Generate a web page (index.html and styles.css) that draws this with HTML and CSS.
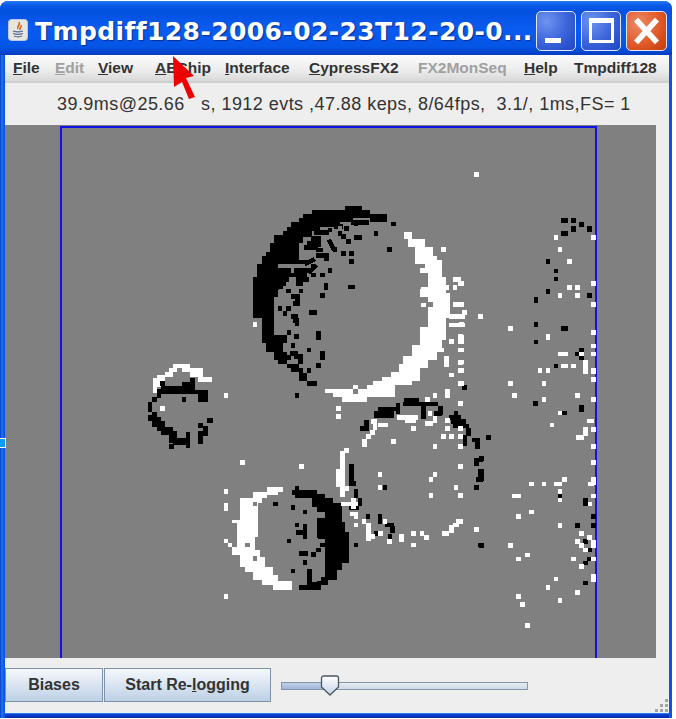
FILE: index.html
```html
<!DOCTYPE html>
<html lang="en">
<head>
<meta charset="utf-8">
<title>Tmpdiff128</title>
<link rel="stylesheet" href="styles.css">
</head>
<body>
<div class="window">
  <header class="titlebar">
    <svg class="appicon" viewBox="0 0 20 22" aria-hidden="true">
      <rect x="0.5" y="0.5" width="19" height="21" rx="3" fill="#e9e6e0" stroke="#b9c6e4"/>
      <path d="M11 3c2 3-3 4-1 7M13 6c1 2-2 3-1 5" fill="none" stroke="#d8641e" stroke-width="1.6"/>
      <path d="M5 12c3 1 7 1 10 0M5 14.5c3 1 7 1 10 0M6 17c2 1 6 1 8 0" fill="none" stroke="#4f6f97" stroke-width="1.3"/>
    </svg>
    <div class="title">Tmpdiff128-2006-02-23T12-20-0...</div>
    <div class="winbtns">
      <div class="winbtn"><span class="min-glyph"></span></div>
      <div class="winbtn"><span class="max-glyph"></span></div>
      <div class="winbtn close">
        <svg viewBox="0 0 40 40" class="x-glyph" aria-hidden="true"><path d="M9 8L31 32M31 8L9 32" stroke="#fff" stroke-width="6" fill="none"/></svg>
      </div>
    </div>
  </header>
  <div class="client">
    <nav class="menubar">
      <span><u>F</u>ile</span>
      <span class="off"><u>E</u>dit</span>
      <span><u>V</u>iew</span>
      <span><u>A</u>EChip</span>
      <span><u>I</u>nterface</span>
      <span><u>C</u>ypressFX2</span>
      <span class="off">FX2MonSeq</span>
      <span><u>H</u>elp</span>
      <span>Tmpdiff128</span>
    </nav>
    <div class="status">39.9ms@25.66   s, 1912 evts ,47.88 keps, 8/64fps,  3.1/, 1ms,FS= 1</div>
    <div class="canvas">
      <svg class="events" viewBox="5 125 651 533" aria-hidden="true">
        <path class="frame" d="M61 658V127H596V658"/>
        <g transform="translate(140 190) scale(.33333)">
          <path class="fk" d="M615 48V60H515V73H490V85H478V97H452V110H440V122H428V135H402V160H390V185H378V197H365V222H352V260H340V385H365V460H378V485H402V510H415V522H440V535H452V547H478V572H500V550H490V535H478V522H440V510H440V485H428V460H440V435H402V322H415V298H428V275H440V250H415V235H415V210H478V160H490V135H515V122H540V110H560V110H600V97H640V85H690V97H742V73H690V60H665V48Z"/>
          <path class="fw" d="M792 125H815V147H855V172H880V197H892V210H905V260H917V310H930V385H917V450H905V485H892V510H865V535H840V572H815V585H765V622H680V635H605V622H580V610H555V598H640V585H655V598H680V585H700V572H725V560H752V547H778V522H790V497H815V465H840V410H865V350H880V335H865V322H840V298H865V250H840V235H855V222H825V172H805V147H792Z"/>
          <path class="fw" d="M38 610V565H50V555H75V547H88V535H100V522H150V535H188V560H215V575H175V560H150V547H125V535H113V547H100V560H75V572H62V590H50V610Z"/>
          <path class="fk" d="M50 610V598H62V588H125V575H150V563H165V600H205V635H175V612H100V612H62V625H50V635H37V665H50V680H62V692H75V710H100V722H112V745H137V725H150V775H137V765H100V760H88V735H62V722H50V710H37V692H25V675H37V665H25V635H37V622H50Z"/>
          <path class="k" d="M132 628h0M182 730v25M196 715v16M208 692h0M182 706h0M94 770h0M68 580h0"/>
          <path class="k" d="M648 102h0M620 115h0M584 102h0M708 90h0M708 130h0M760 102h0M648 142h12M748 178h0M508 160h14M570 155l10 20M585 178h0M610 190h0M635 190h0M635 215h0M536 196h24v10M460 155h0M435 190h0M460 190v18M520 230h0M570 242h0M485 242h0M510 242h0M520 255h0M548 255h0M558 285v8M630 291h8M548 316h0M445 303h0M483 303h0M460 320h12v20h-6M420 355h0M445 355h0M435 370h0M460 380h6M465 392h6v8M515 367h8M535 430v14M470 440h0M447 427h0M459 467h0M507 480h0M547 490v14M458 490h10M470 500h12v14M445 503h0M535 527h0M507 542h0M508 580h16M471 617h0M600 115v16M610 140h0M625 155h0M570 120h0M975 592h0"/>
          <path class="k" d="M420 216h75M420 242h25M470 242h30M445 255h50M410 268h30M475 268h25M405 281h25M475 281h8M395 293h15M500 220l18 -10M510 245l15 -15M520 145h15v20M500 172h26M535 180h8M485 135h25M530 128h30M590 110h12M640 97h40"/>
          <path class="w" d="M345 403h0M910 178h0M945 268h12M960 280h0M945 292h0M920 292h0M947 343h16M975 367h0M935 380h32M935 405h32M962 440v15M935 455h0M962 480h0M905 480h0M920 505v20M962 517h0M962 542h0M935 555h0M962 580h0M922 604v12M885 617h0M862 628h0M595 655h0M595 680h0M258 617h0M68 655h0M850 298h14M850 345h0"/>
          <path class="g" d="M118 540h0M600 115h0"/>
        </g>
        <g transform="translate(210 390) scale(.33333)">
          <path class="fw" d="M172 290H220V305H205V315H170V325H155V340H145V440H135V480H150V500H165V530H190V555H205V572H245V600H190V585H155V570H130V545H105V530H90V495H65V470H80V400H65V390H90V325H130V305H172Z"/>
          <path class="fk" d="M245 300H255V288H268V300H320V312H345V325H370V340H395V395H405V425H418V520H395V540H380V570H355V585H332V600H268V585H292V538H305V575H320V560H345V445H320V385H345V365H320V350H305V325H255V315H245Z"/>
          <path class="fk" d="M493 85V62H505V50H560V62H552V85Z"/>
          <path class="k" d="M590 30h30M585 42h50M564 45v20M640 50v30M650 42h28M692 55v12M680 70h10M738 70h0M725 82h20M730 95h30M735 108h35M775 120v10M765 142v18M792 150h10v20M800 210h12M800 216v6M812 245v20M805 268h8M800 293h0M835 142h0M525 293h0M470 98v8M456 115h14M424 230v50M432 280h0M438 305v12M450 330v12M425 352h16M474 380h0M510 380v14M533 405h12M548 415v6M498 430h0M540 440h0M438 465h0M812 465h0"/>
          <path class="k" d="M196 342h0M249 353h0M285 366h0M261 405h0M265 428h20M285 410v30M237 453h0M330 441h10M338 465h0M325 480h0M311 493h0M275 490h12M285 518h0M249 543h0M261 16h0M2 92h0"/>
          <path class="w" d="M398 190v125M386 245v40M410 182h0M410 295h0M400 342h36M430 330v20M426 372h12v8M438 405h0M462 395h0M475 405v40M488 440h0M512 430h0M538 455h0M575 440v10M610 430h0M636 430h0M650 442h0M610 465h0M702 430h8M725 412v10M735 405h5M745 395h6M800 418h0M525 395h0M900 465h0M568 82h50M592 92h20M652 100h10M660 70h0M675 85v6M490 95h5M495 100v12M512 105h14M487 128h0M475 140h0M463 155v10M48 305h0M48 345v10M98 217h0M274 229h0M48 619h0M48 16h0M48 453h0M60 465h0M510 253h0M510 293h0M675 253h0M663 268h0M738 293h0M663 317h0M752 317h0M752 230h0M385 55h0M385 80h0M752 40h0M675 16h0M712 8v8M610 116h0M550 155h0M675 170h0M752 170h0M700 140h0M725 140h0M752 140h0M752 116h0M712 116h0M712 92h0M652 28h0"/>
          <path class="g" d="M135 342h0M113 465h0M135 505h0M325 566h0M437 5h0"/>
        </g>
        <g transform="translate(460 160) scale(.33333)">
          <path class="k" d="M310 181h6M340 181h0M364 193h0M340 205v4M388 205v4M310 220h6M264 305h0M288 333h0M288 357h0M264 394h0M388 406h0M228 418v4M228 494h0M310 506h6M228 546h0M364 570h0M352 582h0M364 594h0M288 618h0M14 682h0"/>
          <path class="w" d="M50 44h0M288 233h0M400 233h0M300 269h0M328 305h0M4 370h0M400 370h0M328 382h0M352 382h0M300 406h0M352 406h0M4 434h0M400 434h0M14 458h0M4 470h0M62 470h0M4 494h0M151 506h0M400 518h0M264 530v4M4 532v14M4 570h0M400 558h0M400 582h0M302 582h16M364 582h0M4 606h0M376 606v28M4 632h0M240 632h0M264 632h0M310 618h8M340 618h0M400 630v6M400 658h0M4 670h0M151 670h0M252 670h0M163 706h0M352 706h0M252 718h0M400 718h0"/>
        </g>
        <g transform="translate(480 400) scale(.33333)">
          <path class="k" d="M167 10h0M254 39h0M304 22v6M27 112h0M4 175h0M2 214v22M6 214v22M240 288h0M316 300v12M340 350h0M292 376h0M340 376h0M316 424h0M328 450h0M328 477h0M316 489h0M316 549h0M4 436h0"/>
          <path class="w" d="M192 0h0M340 0h0M240 39h0M216 75h0M328 63h8M340 88h0M316 88v12M294 112h10M340 140h0M340 188h0M155 252h0M192 252h0M228 252h10M254 238h0M340 238v10M330 252h6M240 275h0M240 300h0M340 288h0M103 288h14M330 312h0M155 336h0M115 350h0M240 376h0M304 400h0M328 412h0M292 424h0M304 436h0M340 428v10M316 450h0M91 436h0M142 465h0M115 477h0M280 477h0M340 477h0M304 500h0M340 528v10M228 537h0M204 563h0M292 577h0M115 590h0M240 601h0M127 613h0M142 677h0"/>
        </g>
      </svg>
    </div>
    <div class="controls">
      <div class="btngroup">
        <button class="btn biases">Biases</button>
        <button class="btn relog">Start Re-<u>l</u>ogging</button>
      </div>
      <div class="slider">
        <div class="slider-fill"></div>
        <svg class="thumb" viewBox="0 0 20 21" aria-hidden="true">
          <defs><linearGradient id="tg" x1="0" y1="0" x2="0" y2="1"><stop offset="0" stop-color="#ffffff"/><stop offset="1" stop-color="#c4d4e8"/></linearGradient></defs>
          <path d="M1.500 3a2 2 0 0 1 2-2h13a2 2 0 0 1 2 2v9l-8.500 8l-8.500-8z" fill="url(#tg)" stroke="#4c5862" stroke-width="1.300"/>
        </svg>
      </div>
      <svg class="grip" viewBox="0 0 16 16" aria-hidden="true">
        <path d="M12 2h3v3h-3zM7 7h3v3H7zM12 7h3v3h-3zM2 12h3v3H2zM7 12h3v3H7zM12 12h3v3h-3z" fill="#a4a4a4"/>
      </svg>
    </div>
  </div>
  <span class="edgemark"></span>
  <svg class="cursor" viewBox="0 0 24 44" aria-hidden="true">
    <path d="M1 0L22 20L14 22L23 41L17 43L10 26L2 31Z" fill="#ee0000"/>
  </svg>
</div>
</body>
</html>
```
FILE: styles.css
```css
html, body {
  margin: 0;
  padding: 0;
  background: #ffffff;
}
.window {
  position: relative;
  box-sizing: border-box;
  width: 672px;
  height: 717px;
  margin-top: 1px;
  padding: 0 3px 5px 5px;
  display: flex;
  flex-direction: column;
  border-radius: 8px 8px 0 0;
  background: linear-gradient(90deg, #0a3cc8 0, #1f78f0 2px, #0b55e4 4px, #0b55e4 100%);
  font-family: "Liberation Sans", Arial, sans-serif;
}
.titlebar {
  height: 54px;
  margin: 0 -3px 0 -5px;
  padding: 0 5px 0 8px;
  display: flex;
  align-items: center;
  border-radius: 8px 8px 0 0;
  background: linear-gradient(180deg, #2a7cf2 0, #0a5ae8 4px, #0450e0 10px, #0a5cf0 28px, #0455e6 46px, #033cc0 54px);
}
.appicon {
  width: 20px;
  height: 22px;
  flex: none;
  margin-top: 4px;
}
.title {
  flex: 1;
  margin-left: 7px;
  margin-top: 6px;
  color: #ffffff;
  font: bold 25px "DejaVu Sans", sans-serif;
  letter-spacing: .4px;
  white-space: nowrap;
  text-shadow: 1px 1px 1px #0a2c90;
}
.winbtns {
  display: flex;
  gap: 5px;
  margin-top: 6px;
}
.winbtn {
  box-sizing: border-box;
  width: 40px;
  height: 40px;
  position: relative;
  border: 1px solid #dfe8fb;
  border-radius: 5px;
  background: radial-gradient(circle at 25% 25%, #6e94ee 0, #3d66dc 50%, #1f44c4 100%);
}
.close {
  width: 41px;
  background: radial-gradient(circle at 30% 30%, #ea8a68 0, #e25a28 55%, #c33a0c 100%);
}
.min-glyph {
  display: block;
  position: absolute;
  left: 8px;
  top: 26px;
  width: 16px;
  height: 5px;
  background: #ffffff;
}
.max-glyph {
  display: block;
  position: absolute;
  left: 7px;
  top: 6px;
  box-sizing: border-box;
  width: 25px;
  height: 25px;
  border: 3px solid #ffffff;
  border-top-width: 5px;
}
.x-glyph {
  display: block;
  width: 100%;
  height: 100%;
}
.client {
  flex: 1;
  min-height: 0;
  display: flex;
  flex-direction: column;
  background: #eeeeee;
  box-shadow: 0 1px #2a7cf2, 0 3px #0a3fd0, 0 5px #0a2fb0;
}
.menubar {
  height: 28px;
  padding-left: 8px;
  display: grid;
  grid-template-columns: 42px 43px 57px 70px 84px 109px 106px 50px auto;
  align-items: center;
  color: #333333;
  font-size: 15.5px;
  font-weight: bold;
  background: linear-gradient(180deg, #fbfbfb 0, #ececec 60%, #d8d8d8 100%);
  border-bottom: 2px solid #cfcfcf;
  box-sizing: border-box;
  white-space: nowrap;
}
.off {
  color: #a0a0a0;
}
.status {
  height: 42px;
  padding-left: 52px;
  display: flex;
  align-items: center;
  color: #333333;
  font-size: 18px;
  letter-spacing: .45px;
  white-space: pre;
}
.canvas {
  height: 533px;
  margin-right: 13px;
  background: #808080;
}
.events {
  display: block;
  width: 651px;
  height: 533px;
  shape-rendering: crispEdges;
  filter: blur(.3px);
}
.frame {
  fill: none;
  stroke: #1212e6;
  stroke-width: 1.6;
}
.fk { fill: #000000; }
.fw { fill: #ffffff; }
.k, .w, .g {
  fill: none;
  stroke-width: 13.5;
  stroke-linecap: square;
  stroke-linejoin: miter;
}
.k { stroke: #000000; }
.w { stroke: #ffffff; }
.g { stroke: #808080; }
.controls {
  flex: 1;
  position: relative;
  display: flex;
  align-items: flex-start;
  padding-top: 10px;
}
.btngroup {
  display: flex;
  gap: 1px;
}
.btn {
  box-sizing: border-box;
  height: 34px;
  padding: 0;
  border: 1px solid #7e93ab;
  color: #333333;
  font: bold 16px "Liberation Sans", Arial, sans-serif;
  background: linear-gradient(180deg, #f4f8fc 0, #e8eef6 25%, #bcd0e6 100%);
}
.biases { width: 98px; }
.relog { width: 167px; }
.slider {
  position: relative;
  box-sizing: border-box;
  width: 247px;
  height: 8px;
  margin-left: 10px;
  margin-top: 14px;
  border: 1px solid #8595aa;
  background: linear-gradient(180deg, #e4ecf5, #cfdbe9);
}
.slider-fill {
  width: 43px;
  height: 100%;
  background: linear-gradient(180deg, #c0d2ea, #9fb8d8);
}
.thumb {
  position: absolute;
  left: 38px;
  top: -8px;
  width: 20px;
  height: 21px;
}
.grip {
  position: absolute;
  right: 0;
  bottom: 0;
  width: 16px;
  height: 16px;
}
.edgemark {
  position: absolute;
  left: 0;
  top: 437px;
  width: 5px;
  height: 8px;
  background: #0a9cff;
  border: 1px solid #ffffff;
  border-left: 0;
}
.cursor {
  position: absolute;
  left: 172px;
  top: 55px;
  width: 24px;
  height: 44px;
}
```
